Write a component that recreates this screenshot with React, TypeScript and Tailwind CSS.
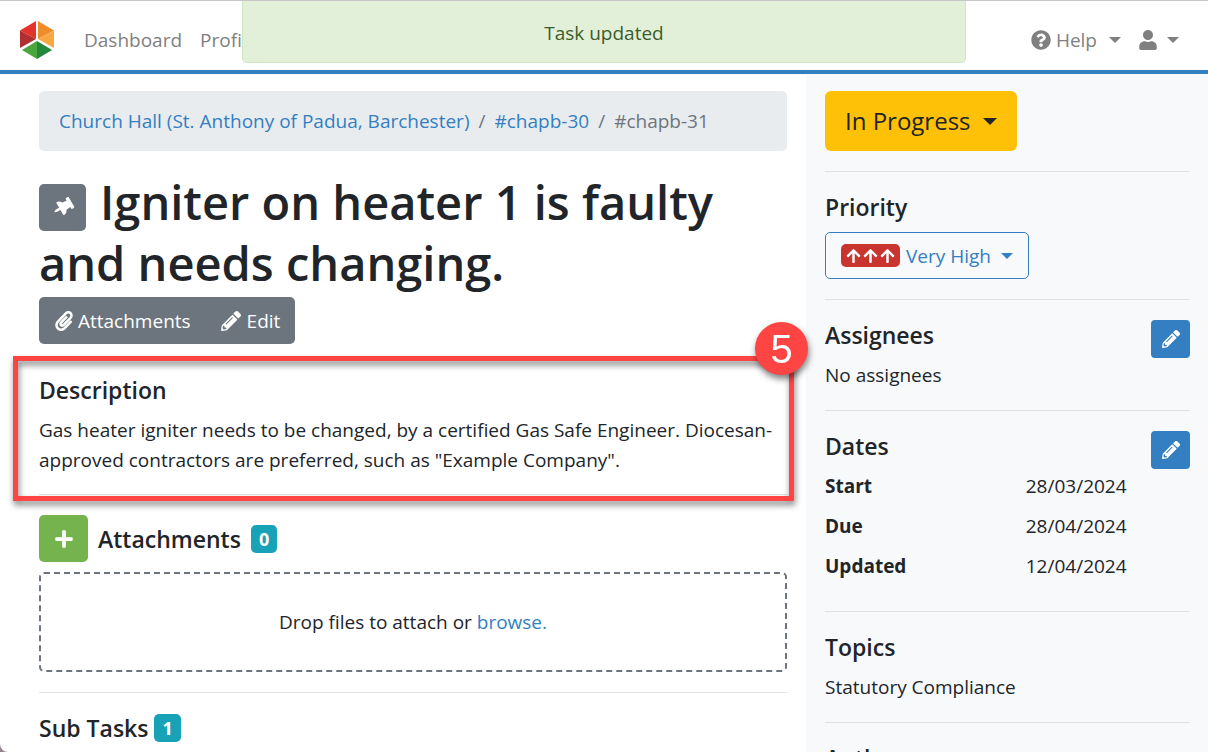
import type { ReactNode } from "react";
import { FaArrowUp, FaPaperclip, FaPencilAlt, FaPlus, FaQuestionCircle, FaThumbtack, FaUser } from "react-icons/fa";

const dates = [
    { label: "Start", value: "28/03/2024" },
    { label: "Due", value: "28/04/2024" },
    { label: "Updated", value: "12/04/2024" },
];

function Logo() {
    return (
        <svg viewBox="0 0 34 38" className="h-[38px] w-[34px]" aria-hidden="true">
            <path d="M16 0v18L0 9.5z" fill="#e4332c" />
            <path d="M0 9.5L16 18 0 27z" fill="#b22f30" />
            <path d="M18 0l16 9.5L18 18z" fill="#f18c2b" />
            <path d="M34 9.5V27L18 18z" fill="#f9a743" />
            <path d="M17 20v18L2 29z" fill="#4aa63d" />
            <path d="M17 20l15 9-15 9z" fill="#25863c" />
        </svg>
    );
}

function Caret({ className = "h-[6px] w-[12px]" }: { className?: string }) {
    return (
        <svg viewBox="0 0 12 6" className={className} aria-hidden="true">
            <path d="M0 0h12L6 6z" fill="currentColor" />
        </svg>
    );
}

function Heading({ children }: { children: ReactNode }) {
    return <h2 className="text-[23px] leading-[30px] font-semibold">{children}</h2>;
}

function Badge({ children }: { children: ReactNode }) {
    return (
        <span className="rounded-[5px] bg-[#17a2b8] px-2 text-[18px] leading-[28px] font-bold text-white">{children}</span>
    );
}

function EditButton({ label }: { label: string }) {
    return (
        <button aria-label={label} className="flex h-[38px] w-[39px] items-center justify-center rounded-[4px] bg-[#337fc1] text-white">
            <FaPencilAlt className="size-[18px]" />
        </button>
    );
}

function Panel({ title, onEdit, children }: { title: string; onEdit?: string; children?: ReactNode }) {
    return (
        <section className="border-t border-[#dfe1e3] py-5">
            <div className="flex h-[30px] items-start justify-between">
                <Heading>{title}</Heading>
                {onEdit && <EditButton label={onEdit} />}
            </div>
            <div className="mt-[10px]">{children}</div>
        </section>
    );
}

export default function App() {
    return (
        <div className="h-screen bg-[#93848f]">
            <div className="relative flex h-full flex-col overflow-hidden rounded-bl-lg border-t border-[#c6c6c6] bg-white font-['Open_Sans','Noto_Sans',sans-serif] text-[19px] leading-[30px] text-[#212529]">
                {/* Navbar */}
                <header className="flex shrink-0 items-center border-b-4 border-[#337fc1] px-5 pt-5 pb-[11px] text-[#808080]">
                    <a href="#home" aria-label="Home"><Logo /></a>
                    <nav className="ml-[30px] flex gap-[18px]">
                        <a href="#dashboard">Dashboard</a>
                        <a href="#profile">Profile</a>
                    </nav>
                    <div className="ml-auto flex items-center gap-[18px] pr-[9px]">
                        <button className="flex items-center">
                            <FaQuestionCircle className="mr-[5px] size-5" />
                            Help
                            <span className="ml-3"><Caret /></span>
                        </button>
                        <button aria-label="Account" className="flex items-center gap-[10px]">
                            <FaUser className="h-5 w-[18px]" />
                            <Caret />
                        </button>
                    </div>
                </header>

                {/* Toast */}
                <div role="alert" className="absolute top-0 left-1/5 w-3/5 rounded-b-[5px] border border-t-0 border-[#d0e6c2] bg-[#e2f0da] pt-[17px] pb-[14px] text-center text-[#3c5d29]">
                    Task updated
                </div>

                <div className="flex min-h-0 flex-1">
                    <main className="min-w-0 flex-1 pt-[17px] pr-[19px] pl-[39px]">
                        <nav aria-label="Breadcrumb" className="flex gap-[9px] rounded-[5px] bg-[#e9ecef] px-5 py-[15px] text-[#6c757d]">
                            <a href="#church-hall" className="text-[#337fc1]">Church Hall (St. Anthony of Padua, Barchester)</a>
                            <span>/</span>
                            <a href="#chapb-30" className="text-[#337fc1]">#chapb-30</a>
                            <span>/</span>
                            <span>#chapb-31</span>
                        </nav>

                        <h1 className="mt-[21px] mb-[3px] text-[47px] leading-[61px] font-semibold">
                            <button aria-label="Pin task" className="mr-[14px] inline-flex size-[47px] items-center justify-center rounded-[5px] bg-[#6c757d] align-middle text-white">
                                <FaThumbtack className="size-5 rotate-60" />
                            </button>
                            Igniter on heater 1 is faulty and needs changing.
                        </h1>
                        <div className="inline-flex h-[47px] rounded-[5px] bg-[#6c757d] text-white">
                            <button className="flex items-center gap-1 px-[15px]"><FaPaperclip className="size-5" />Attachments</button>
                            <button className="flex items-center gap-[6px] px-[15px]"><FaPencilAlt className="size-5" />Edit</button>
                        </div>

                        {/* Description with numbered callout */}
                        <section className="relative mt-[31px] border-b border-[#dfe1e3] pb-[19px]">
                            <Heading>Description</Heading>
                            <p className="mt-[10px]">
                                Gas heater igniter needs to be changed, by a certified Gas Safe Engineer. Diocesan-approved contractors are preferred, such as "Example Company".
                            </p>
                            <div className="pointer-events-none absolute -top-[19px] -right-[7px] -bottom-[7px] -left-[26px] border-[5px] border-[#ff4444] drop-shadow-[1px_4px_3px_rgba(0,0,0,0.5)]" />
                            <div className="absolute -top-[53px] -right-[21px] flex size-[53px] items-center justify-center rounded-full bg-[#ff4444] font-['Liberation_Sans',sans-serif] text-[40px] text-white drop-shadow-[1px_4px_3px_rgba(0,0,0,0.5)]">5</div>
                        </section>

                        <section className="border-b border-[#dfe1e3] py-5">
                            <div className="flex items-center gap-[10px]">
                                <button aria-label="Add attachment" className="flex h-[47px] w-[49px] items-center justify-center rounded-[5px] bg-[#75b34f] text-white">
                                    <FaPlus className="size-5" />
                                </button>
                                <Heading>Attachments</Heading>
                                <Badge>0</Badge>
                            </div>
                            <div className="mt-[10px] rounded-[5px] border-2 border-dashed border-[#6c757d] py-[33px] text-center">
                                Drop files to attach or <a href="#browse" className="text-[#337fc1]">browse.</a>
                            </div>
                        </section>

                        <section className="flex items-center gap-[6px] py-5">
                            <Heading>Sub Tasks</Heading>
                            <Badge>1</Badge>
                        </section>
                    </main>

                    <aside className="w-1/3 max-w-[402px] shrink-0 bg-[#f8f9fb] pt-[17px] pr-[18px] pl-[19px]">
                        <button className="mb-5 flex h-[60px] items-center gap-3 rounded-[6px] bg-[#ffc107] px-5 text-[24px]">
                            In Progress
                            <Caret className="h-[7px] w-[14px]" />
                        </button>
                        <Panel title="Priority">
                            <button className="flex h-[47px] items-center rounded-[5px] border border-[#337fc1] px-[15px] text-[#337fc1]">
                                <span className="mr-[6px] flex h-[23px] items-center rounded-[5px] bg-[#c9342f] px-1 text-white">
                                    <FaArrowUp className="h-4 w-[17px]" />
                                    <FaArrowUp className="h-4 w-[17px]" />
                                    <FaArrowUp className="h-4 w-[17px]" />
                                </span>
                                Very High
                                <span className="ml-[10px]"><Caret /></span>
                            </button>
                        </Panel>
                        <Panel title="Assignees" onEdit="Edit assignees">No assignees</Panel>
                        <Panel title="Dates" onEdit="Edit dates">
                            <table className="w-full">
                                <tbody>
                                    {dates.map((row) => (
                                        <tr key={row.label}>
                                            <th scope="row" className="w-[55%] pb-[10px] text-left font-bold">{row.label}</th>
                                            <td className="pb-[10px]">{row.value}</td>
                                        </tr>
                                    ))}
                                </tbody>
                            </table>
                        </Panel>
                        <Panel title="Topics">Statutory Compliance</Panel>
                        <Panel title="Author" />
                    </aside>
                </div>
            </div>
        </div>
    );
}
